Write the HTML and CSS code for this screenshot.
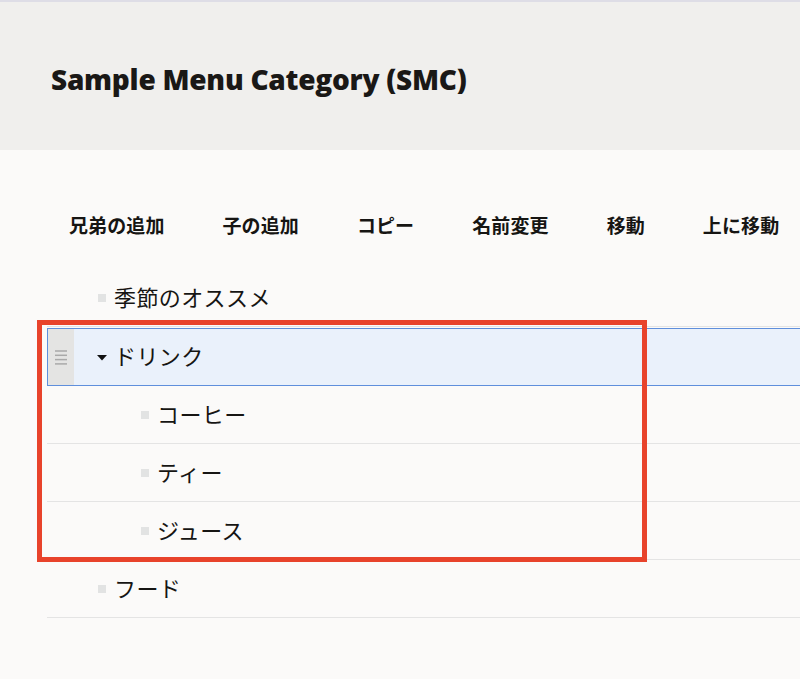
FILE: index.html
```html
<!DOCTYPE html>
<html lang="ja">
<head>
<meta charset="utf-8">
<title>Sample Menu Category (SMC)</title>
<link rel="stylesheet" href="styles.css">
</head>
<body>
<header class="header">
  <h1 class="title">Sample Menu Category (SMC)</h1>
</header>
<main class="content">
  <nav class="toolbar">
    <button class="tool">兄弟の追加</button>
    <button class="tool">子の追加</button>
    <button class="tool">コピー</button>
    <button class="tool">名前変更</button>
    <button class="tool">移動</button>
    <button class="tool">上に移動</button>
  </nav>
  <div class="tree-wrap">
    <ul class="tree">
      <li class="row level1"><span class="bullet"></span><span class="label">季節のオススメ</span></li>
      <li class="row level1 selected">
        <span class="handle"><svg width="12" height="15" viewBox="0 0 12 15"><g stroke="#a9a9a9" stroke-width="1.5"><line x1="0" y1="1" x2="12" y2="1"/><line x1="0" y1="5.3" x2="12" y2="5.3"/><line x1="0" y1="9.6" x2="12" y2="9.6"/><line x1="0" y1="13.9" x2="12" y2="13.9"/></g></svg></span>
        <span class="caret"><svg width="10" height="6" viewBox="0 0 10 6"><path d="M0 0H10L5 5.5Z" fill="#111"/></svg></span><span class="label">ドリンク</span>
      </li>
      <li class="row level2"><span class="bullet"></span><span class="label">コーヒー</span></li>
      <li class="row level2"><span class="bullet"></span><span class="label">ティー</span></li>
      <li class="row level2"><span class="bullet"></span><span class="label">ジュース</span></li>
      <li class="row level1"><span class="bullet"></span><span class="label">フード</span></li>
    </ul>
    <div class="highlight"></div>
  </div>
</main>
</body>
</html>
```

FILE: styles.css
```css
* { box-sizing: border-box; }
html, body { margin: 0; padding: 0; }
body {
  background: #fbfaf9;
  font-family: "Noto Sans CJK JP", "Noto Sans", sans-serif;
  color: #161513;
  overflow: hidden;
}
.header {
  height: 150px;
  background: #f0efed;
  border-top: 2px solid #dedde6;
  display: flex;
  align-items: center;
  padding-left: 51px;
}
.title {
  margin: 0;
  margin-top: 6px;
  font-family: "Open Sans", "Noto Sans", sans-serif;
  font-weight: 800;
  font-size: 28px;
  letter-spacing: -0.25px;
  color: #1a1816;
}
.content {
  padding-top: 54px;
}
.toolbar {
  display: flex;
  height: 40px;
  padding-left: 40px;
  margin-bottom: 25px;
}
.tool {
  background: none;
  border: 0;
  padding: 0 29px;
  height: 40px;
  font-family: "Noto Sans CJK JP", sans-serif;
  font-weight: 700;
  font-size: 19px;
  letter-spacing: 0.1px;
  color: #161513;
  white-space: nowrap;
}
.tree-wrap {
  position: relative;
  margin-left: 47px;
}
.tree {
  list-style: none;
  margin: 0;
  padding: 0;
}
.row {
  display: flex;
  align-items: center;
  height: 58px;
  border-bottom: 1px solid #e4e4e4;
  font-size: 22px;
  position: relative;
}
.level1 { padding-left: 51px; }
.level2 { padding-left: 94px; }
.bullet {
  width: 8px;
  height: 8px;
  background: #e2e3e3;
  margin-right: 8px;
  flex: none;
}
.label {
  line-height: 1;
  margin-bottom: 4px;
  letter-spacing: 0.4px;
}
.selected {
  margin-top: 1px;
  height: 58px;
  border: 1px solid #5f8fdc;
  border-right: 0;
  background: #eaf1fb;
  padding-left: 0;
}
.handle {
  width: 26px;
  align-self: stretch;
  background: #e4e4e3;
  display: flex;
  align-items: center;
  justify-content: center;
  margin-right: 23px;
  flex: none;
}
.caret {
  display: flex;
  width: 10px;
  margin-right: 7px;
  margin-top: 1px;
  flex: none;
}
.highlight {
  position: absolute;
  left: -10px;
  top: 51px;
  width: 610px;
  height: 242px;
  border: 5px solid #e8432b;
  pointer-events: none;
}
```
